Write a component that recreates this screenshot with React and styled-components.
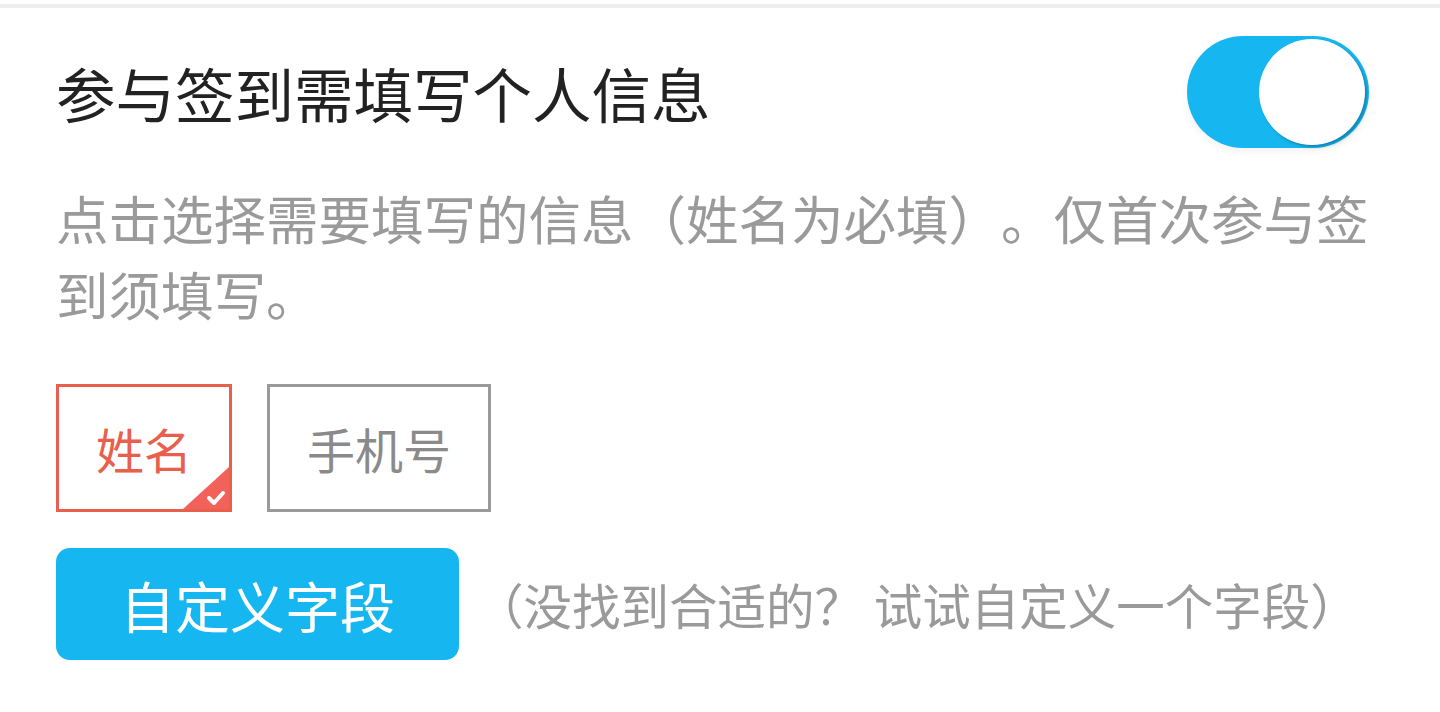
import React, { useState } from "react";
import styled, { createGlobalStyle } from "styled-components";

const Global = createGlobalStyle`
  html, body { margin: 0; padding: 0; background: #ffffff; }
  body {
    font-family: "Noto Sans CJK SC", "Noto Sans", sans-serif;
    text-spacing-trim: space-all;
  }
  * { box-sizing: border-box; }
`;

const Page = styled.div`
  width: 1440px;
  height: 712px;
  background: #fff;
  padding-top: 4px;
`;

const Divider = styled.div`
  height: 4px;
  background: #eeeeee;
`;

const Section = styled.section`
  padding: 0 56px;
`;

const HeaderRow = styled.div`
  display: flex;
  align-items: center;
  justify-content: space-between;
  height: 112px;
  margin-top: 28px;
`;

const Title = styled.h2`
  margin: 0;
  font-size: 59.5px;
  font-weight: 400;
  color: #222;
  line-height: 1;
  padding-top: 2px;
`;

const Track = styled.button`
  position: relative;
  width: 182px;
  height: 112px;
  margin-right: 15px;
  border: none;
  border-radius: 56px;
  padding: 0;
  background: ${(p) => (p.$on ? "#16b7f0" : "#e5e5e5")};
  box-shadow: 0 3px 8px rgba(0, 0, 0, 0.06);
  cursor: pointer;
`;

const Knob = styled.span`
  position: absolute;
  top: 3px;
  left: ${(p) => (p.$on ? "72px" : "3px")};
  width: 106px;
  height: 106px;
  border-radius: 50%;
  background: #fff;
  box-shadow: 2px 2px 3px rgba(10, 90, 130, 0.55);
`;

const Description = styled.p`
  margin: 31px 0 0;
  font-size: 52.5px;
  line-height: 76px;
  color: #9a9a9a;
`;

const Tags = styled.div`
  display: flex;
  gap: 35px;
  margin-top: 53px;
`;

const Tag = styled.div`
  position: relative;
  height: 128px;
  padding: 0 37px;
  display: flex;
  align-items: center;
  border: 3px solid ${(p) => (p.$selected ? "#e8604c" : "#9a9a9a")};
  color: ${(p) => (p.$selected ? "#e8604c" : "#8a8a8a")};
  font-size: 48px;
  line-height: 1;
`;

const Corner = styled.svg`
  position: absolute;
  right: 0;
  bottom: 0;
`;

const ActionRow = styled.div`
  display: flex;
  align-items: center;
  margin-top: 36px;
`;

const PrimaryButton = styled.button`
  width: 403px;
  height: 112px;
  border: none;
  border-radius: 14px;
  background: #16b7f0;
  color: #fff;
  font-family: inherit;
  font-size: 55px;
  line-height: 1;
  padding: 0;
  cursor: pointer;
`;

const Hint = styled.span`
  margin-left: 16px;
  font-size: 48.5px;
  color: #9a9a9a;
  white-space: nowrap;
`;

export default function App() {
  const [on, setOn] = useState(true);
  return (
    <Page>
      <Global />
      <Divider />
      <Section>
        <HeaderRow>
          <Title>参与签到需填写个人信息</Title>
          <Track $on={on} onClick={() => setOn(!on)} aria-label="toggle">
            <Knob $on={on} />
          </Track>
        </HeaderRow>
        <Description>
          点击选择需要填写的信息（姓名为必填）。仅首次参与签到须填写。
        </Description>
        <Tags>
          <Tag $selected>
            姓名
            <Corner width="46" height="42" viewBox="0 0 46 42">
              <polygon points="46,0 46,42 0,42" fill="#f2625a" />
              <path
                d="M26 31 L31 36 L40 26"
                stroke="#fff"
                strokeWidth="4"
                fill="none"
                strokeLinecap="round"
                strokeLinejoin="round"
              />
            </Corner>
          </Tag>
          <Tag>手机号</Tag>
        </Tags>
        <ActionRow>
          <PrimaryButton>自定义字段</PrimaryButton>
          <Hint>（没找到合适的？ 试试自定义一个字段）</Hint>
        </ActionRow>
      </Section>
    </Page>
  );
}
